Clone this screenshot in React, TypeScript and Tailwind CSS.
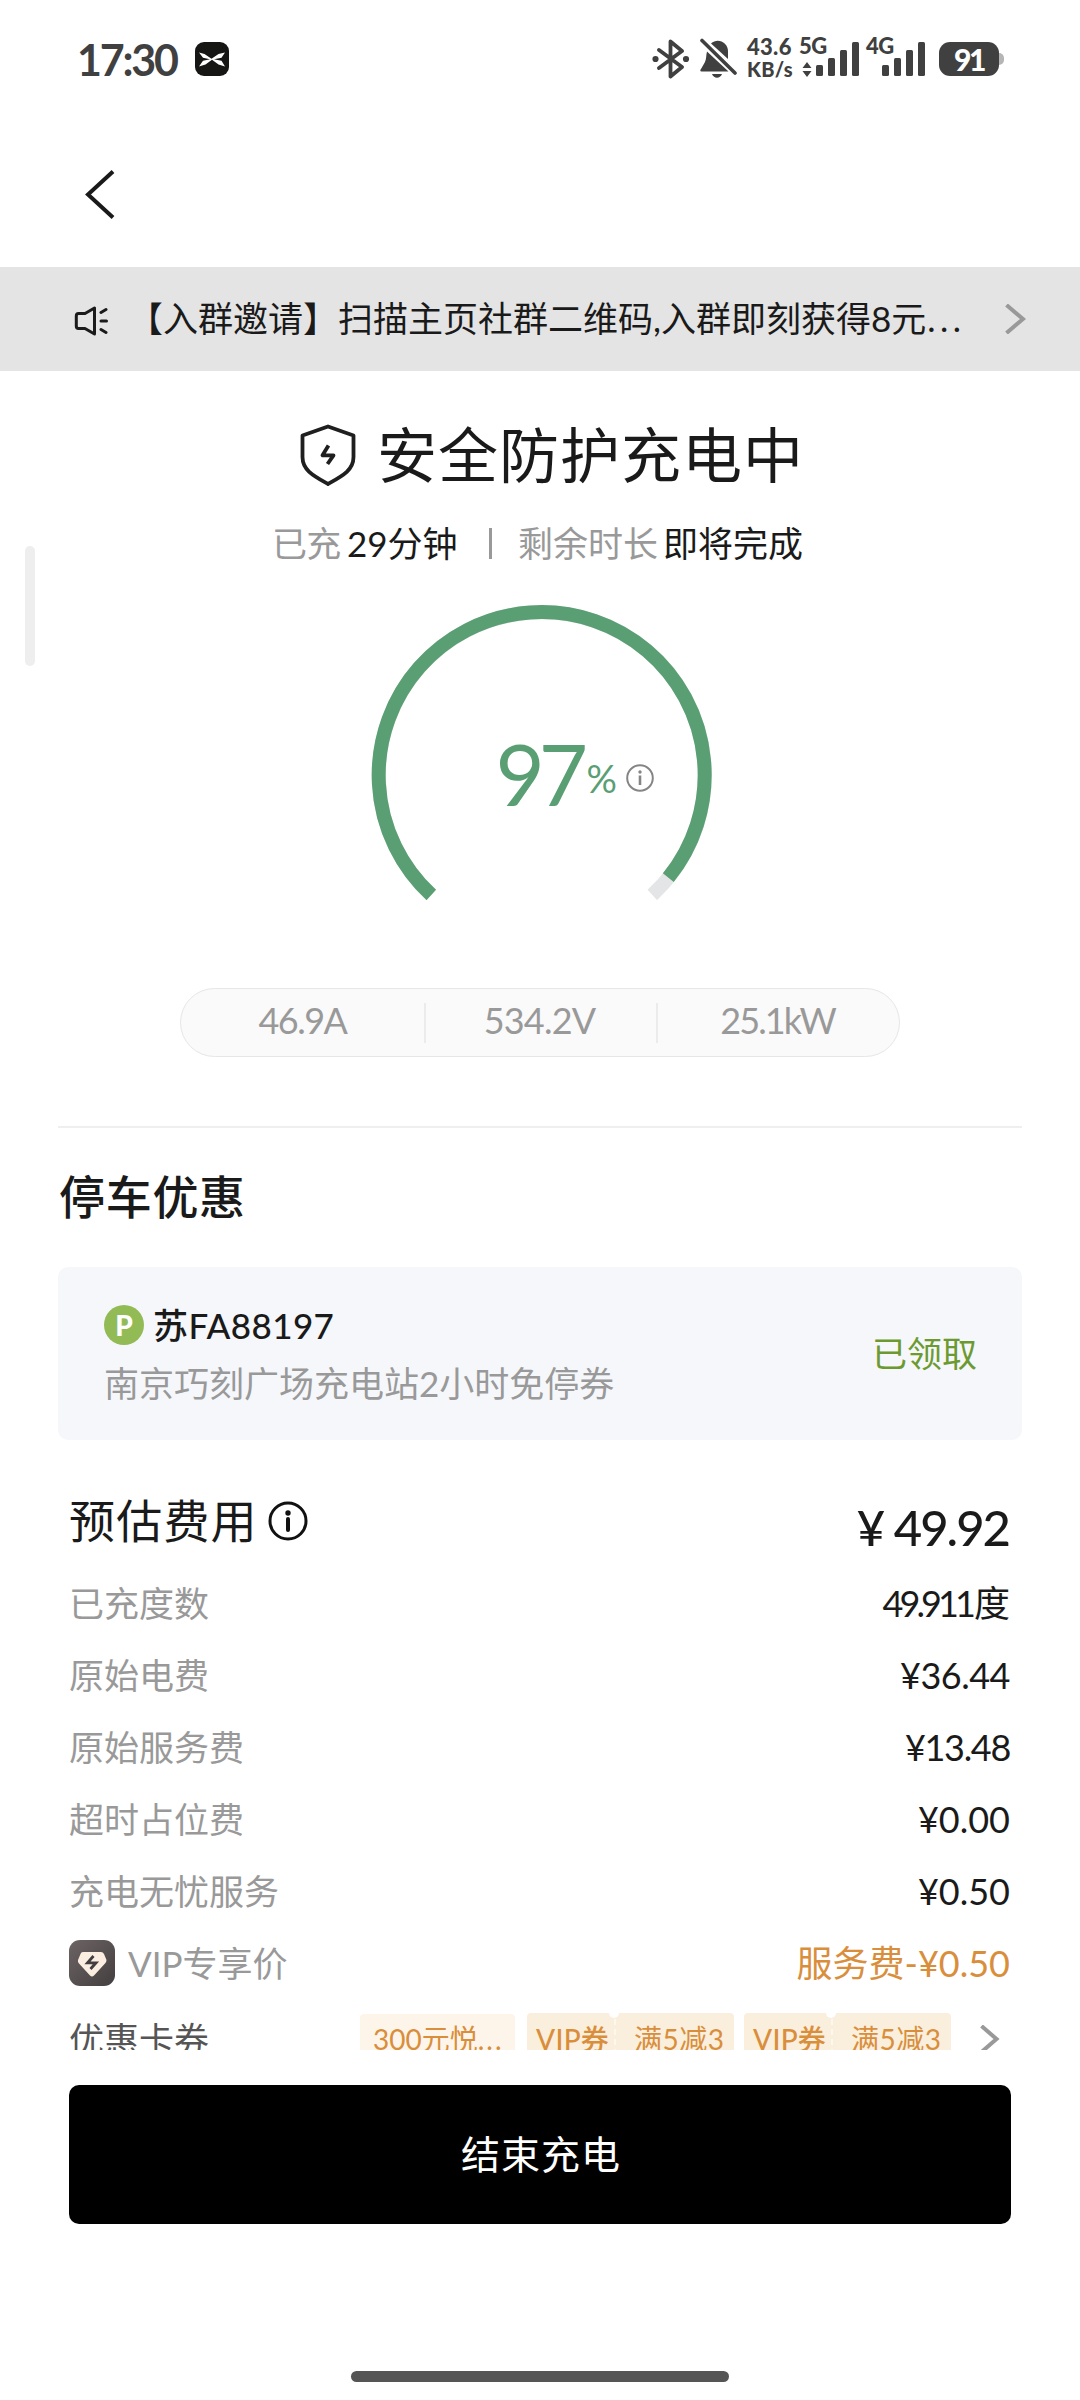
import React from 'react'

interface FeeRow {
  label: string
  value: string
  unit?: string
  tracking: string
}

const feeRows: FeeRow[] = [
  { label: '已充度数', value: '49.911', unit: '度', tracking: 'tracking-[-3.9px] mr-[2px]' },
  { label: '原始电费', value: '¥36.44', tracking: 'tracking-[-0.5px]' },
  { label: '原始服务费', value: '¥13.48', tracking: 'tracking-[-1.3px]' },
  { label: '超时占位费', value: '¥0.00', tracking: 'tracking-normal' },
  { label: '充电无忧服务', value: '¥0.50', tracking: 'tracking-normal' }
]

function SignalBars() {
  return (
    <svg className="h-[34px] w-[44px]" viewBox="0 0 44 34" fill="#404040">
      <rect x="0" y="23" width="7" height="11" rx="1.5" />
      <rect x="12" y="16" width="7" height="18" rx="1.5" />
      <rect x="24" y="8" width="7" height="26" rx="1.5" />
      <rect x="36" y="0" width="7" height="34" rx="1.5" />
    </svg>
  )
}

function StatusBar() {
  return (
    <div className="flex h-[120px] items-start pl-[77px] pr-[76px] pt-[36px] text-[#404040]">
      <div className="flex h-[46px] w-[118px] items-center text-[43px] font-bold leading-none tracking-[-2.2px]">17:30</div>
      <svg className="mt-[6px] h-[34px] w-[34px]" viewBox="0 0 34 34">
        <rect width="34" height="34" rx="9" fill="#161715" />
        <path
          d="M4 10.5L9.5 12l7 4.8L23.500 12 30 10.500 26.500 15.800 19 17.200 26.500 18.800 30 24.500 23.500 22.500 17 17.700 10.500 22.500 4 24.500 8 18.800 15 17.200 8 15.800z"
          fill="#fff"
        />
      </svg>
      <div className="flex-1" />
      <svg className="mt-[3px] h-[40px] w-[38px]" viewBox="0 0 38 40" fill="none" stroke="#404040" strokeWidth="3.8" strokeLinejoin="round" strokeLinecap="round">
        <path d="M7 11L30 28 18.500 37.500V2.500L30 12 7 29" />
        <circle cx="3.500" cy="20" r="1.600" fill="#404040" strokeWidth="3" />
        <circle cx="34" cy="20" r="1.600" fill="#404040" strokeWidth="3" />
      </svg>
      <svg className="ml-[10px] mt-[2px] h-[40px] w-[37px]" viewBox="0 0 37 40" fill="#404040">
        <path d="M7 13.500L28.500 33.500H1.500C0 33.500 0 32 1 31l4-7c1.500-3 1-7 2-10.500z" />
        <path d="M11 5.500C18-1 28 5 28 13v8z" />
        <path d="M12 36h10c-2 5-8 5-10 0z" />
        <path d="M2 2.500L35 35" stroke="#404040" strokeWidth="3.600" strokeLinecap="round" />
      </svg>
      <div className="ml-[10px] -mt-px flex w-[52px] flex-col text-[22px] font-black leading-[23px]">
        <span className="tracking-[0.3px]">43.6</span>
        <span className="text-[20px] tracking-[0.3px]">KB/s</span>
      </div>
      <div className="relative flex h-[42px] w-[67px] items-end pl-[17px] pt-[6px]">
        <span className="absolute left-0 top-[-2px] text-[22px] font-black leading-[23px] tracking-[-0.5px]">5G</span>
        <svg className="absolute bottom-[1px] left-[3px] h-[15px] w-[10px]" viewBox="0 0 10 15" fill="#404040">
          <path d="M5 0l4.500 6h-9zM5 15l4.500-6h-9z" />
        </svg>
        <div className="h-[36px]">
          <SignalBars />
        </div>
      </div>
      <div className="relative flex h-[42px] w-[73px] items-end pl-[16px] pt-[6px]">
        <span className="absolute left-0 top-[-2px] text-[22px] font-black leading-[23px] tracking-[-0.5px]">4G</span>
        <div className="h-[36px]">
          <SignalBars />
        </div>
      </div>
      <div className="mt-[6px] flex items-center">
        <div className="flex h-[34px] w-[60px] items-center justify-center rounded-[11px] bg-[#404040] pb-px text-[30px] font-black leading-none tracking-[-2.500px] text-white">91</div>
        <div className="h-[12px] w-[5px] rounded-r-full bg-[#b5b5b5]" />
      </div>
    </div>
  )
}

function NoticeBar() {
  return (
    <div className="flex h-[104px] items-center bg-[#e4e4e4] pl-[74px] text-[35px] text-[#1a1a1a]">
      <svg className="mt-[4px] h-[30px] w-[34px]" viewBox="0 0 34 30" fill="none" stroke="#1a1a1a" strokeWidth="3" strokeLinejoin="round" strokeLinecap="round">
        <path d="M4.500 7.500H11L20.500 2V28L11 22.500H4.500Q2.300 22.500 2.300 20V10Q2.300 7.500 4.500 7.500z" />
        <path d="M27 6.500l5-3M27 15h5.500M27 23.500l5 3" />
      </svg>
      <p className="ml-[20px] w-[860px] whitespace-nowrap pb-[2px] leading-[50px]">
        【入群邀请】扫描主页社群二维码,入群即刻获得8元<span className="pl-px tracking-[4.500px]">...</span>
      </p>
      <svg className="ml-[17px] h-[30px] w-[21px]" viewBox="0 0 21 30" fill="none" stroke="#999" strokeWidth="4">
        <path d="M1.500 1L18 15 1.500 29" />
      </svg>
    </div>
  )
}

function ChargeStatus() {
  return (
    <>
      <div className="mt-[48px] flex h-[72px] items-center pl-[300px]">
        <svg className="h-[62px] w-[56px]" viewBox="0 0 56 62" fill="none" stroke="#1f1f1f" strokeWidth="3.800" strokeLinejoin="round">
          <path d="M28 2.500L53.500 11.500V33C53.500 46 43 51.500 28 60 13 51.500 2.500 46 2.500 33V11.500z" />
          <path d="M28.500 21.500L22.500 31.300H33.500L27.500 40" />
        </svg>
        <h1 className="ml-[21px] whitespace-nowrap text-[60px] font-normal leading-[72px] tracking-[1px] text-[#1a1a1a]">安全防护充电中</h1>
      </div>
      <div className="mt-[27px] flex h-[50px] items-center whitespace-nowrap pl-[272px] text-[35px] leading-[50px] text-[#1a1a1a]">
        <span className="w-[75px] tracking-[-0.800px] text-[#999]">已充</span>
        <span className="w-[142px]">29分钟</span>
        <span className="h-[31px] w-[3px] bg-[#999]" />
        <span className="ml-[26px] w-[145px] text-[#999]">剩余时长</span>
        <span>即将完成</span>
      </div>
    </>
  )
}

function Gauge() {
  return (
    <div className="mt-[32px] flex justify-center pl-[3px]">
      <div className="relative h-[300px] w-[342px]">
        <svg className="h-[300px] w-[342px]" viewBox="371 600 342 300" fill="none" strokeWidth="14">
          <path d="M431.300 895A163 163 0 1 1 652.300 895" stroke="#e4e5e6" />
          <path d="M431.300 895A163 163 0 1 1 668.300 877.700" stroke="#5a9f74" />
        </svg>
        <div className="absolute left-[125px] top-[123px] flex h-[100px] items-center text-[#5a9f74]">
          <span className="w-[91px] text-[85px] leading-[100px] tracking-[-6px]">97</span>
          <span className="mt-[10px] text-[38px] leading-[44px]">%</span>
        </div>
        <svg className="absolute left-[255px] top-[164px] h-[28px] w-[28px]" viewBox="0 0 28 28" fill="none" stroke="#858585" strokeWidth="2">
          <circle cx="14" cy="14" r="12.800" />
          <path d="M14 11.500v9.500" strokeWidth="2.600" />
          <circle cx="14" cy="8" r="1.700" fill="#858585" stroke="none" />
        </svg>
      </div>
    </div>
  )
}

function Metrics() {
  return (
    <div className="ml-[180px] mt-[88px] flex h-[69px] w-[720px] items-center rounded-full border-[1.500px] border-[#e6e6e6] bg-[#fafafa] text-center text-[36px] text-[#999]">
      <span className="h-[40px] w-[245px] border-r-2 border-[#ebebeb] leading-[35px] tracking-[-1.500px]">46.9A</span>
      <span className="h-[40px] w-[232px] border-r-2 border-[#ebebeb] pr-[3px] leading-[35px] tracking-[-0.800px]">534.2V</span>
      <span className="h-[40px] flex-1 pr-[2px] leading-[35px] tracking-[-1.900px]">25.1kW</span>
    </div>
  )
}

function ParkingCard() {
  return (
    <div className="mx-[58px] flex h-[173px] items-center justify-between rounded-[10px] bg-[#f5f7fb] pl-[46px] pr-[45px]">
      <div className="whitespace-nowrap">
        <div className="flex h-[50px] items-center text-[35px] text-[#1a1a1a]">
          <span className="flex h-[40px] w-[40px] items-center justify-center rounded-full bg-[#93bb55] text-[28px] font-black text-white">P</span>
          <span className="ml-[9px] font-medium leading-[50px] tracking-[0.400px]">苏FA88197</span>
        </div>
        <div className="mt-[8px] text-[35px] leading-[50px] text-[#999]">南京巧刻广场充电站2小时免停券</div>
      </div>
      <span className="pb-[2px] text-[35px] leading-[50px] text-[#6d9a30]">已领取</span>
    </div>
  )
}

function VipIcon() {
  return (
    <svg className="h-[46px] w-[46px]" viewBox="0 0 46 46">
      <defs>
        <linearGradient id="vip" x1="0" y1="0" x2="1" y2="1">
          <stop offset="0" stopColor="#6d6464" />
          <stop offset="1" stopColor="#433e3f" />
        </linearGradient>
      </defs>
      <rect width="46" height="46" rx="11" fill="url(#vip)" />
      <path d="M14 12H32Q34 12 35 14L37.500 20Q37.500 22 36 23.500L25 35.500Q23 37.500 21 35.500L10 23.500Q8.500 22 9 20L11.500 14Q12 12 14 12z" fill="#fbeee0" />
      <path d="M24.500 16L18.500 22.800H27L21.500 29" fill="none" stroke="#433e3f" strokeWidth="2.800" />
    </svg>
  )
}

function Coupon({ name, text }: { name: string; text: string }) {
  return (
    <div className="relative flex h-[52px] w-[207px] items-center rounded-[4px] bg-[#faefdd]">
      <span className="w-[87px] pl-[9px] font-medium tracking-[0.300px]">{name}</span>
      <span className="pl-[20px] tracking-[0.500px]">{text}</span>
      <span className="absolute left-[82px] top-[-5px] h-[10px] w-[10px] rounded-full bg-white" />
      <span className="absolute left-[87px] top-[6px] h-[46px] border-l-2 border-dashed border-[#fdf8ee]" />
    </div>
  )
}

function FeeSection() {
  return (
    <div className="h-[610px] overflow-hidden pl-[69px] pr-[70px] text-[35px] text-[#1a1a1a]">
      <div className="mt-[41px] flex h-[80px] items-center justify-between">
        <div className="flex items-center">
          <h2 className="text-[46px] font-normal leading-[60px] tracking-[1.200px]">预估费用</h2>
          <svg className="ml-[10px] h-[40px] w-[40px]" viewBox="0 0 40 40" fill="none" stroke="#111" strokeWidth="3">
            <circle cx="20" cy="20" r="18" />
            <path d="M20 18v11" strokeWidth="4" strokeLinecap="round" />
            <circle cx="20" cy="12" r="2.700" fill="#111" stroke="none" />
          </svg>
        </div>
        <div className="mt-[11px] flex text-[49px] font-medium leading-[60px]">
          <span className="w-[37px]">¥</span>
          <span className="mr-px tracking-[-2px]">49.92</span>
        </div>
      </div>
      <div className="mt-[6px]">
        {feeRows.map((row) => (
          <div key={row.label} className="flex h-[72px] items-center justify-between">
            <span className="text-[#999]">{row.label}</span>
            <span className="text-[36px]">
              <span className={row.tracking}>{row.value}</span>
              {row.unit}
            </span>
          </div>
        ))}
      </div>
      <div className="flex h-[72px] items-center">
        <VipIcon />
        <span className="ml-[13px] flex-1 text-[#999]">VIP专享价</span>
        <span className="text-[36px] text-[#d98e3c]">服务费-¥0.50</span>
      </div>
      <div className="flex h-[80px] items-center text-[28px] text-[#d98e3c]">
        <span className="w-[291px] text-[35px] text-[#555]">优惠卡券</span>
        <div className="flex h-[50px] w-[155px] items-center rounded-[4px] bg-[#fdf5e9] pl-[13px]">
          300元悦<span className="tracking-[2px]">...</span>
        </div>
        <div className="ml-[12px] flex gap-[10px]">
          <Coupon name="VIP券" text="满5减3" />
          <Coupon name="VIP券" text="满5减3" />
        </div>
        <svg className="ml-[29px] h-[28px] w-[20px]" viewBox="0 0 20 28" fill="none" stroke="#999" strokeWidth="4">
          <path d="M1.500 1l15 13L1.500 27" />
        </svg>
      </div>
    </div>
  )
}

export default function App() {
  return (
    <div className="relative flex h-[2400px] w-[1080px] flex-col overflow-hidden bg-white font-['Lato','Noto_Sans_CJK_SC',sans-serif]">
      <StatusBar />
      <div className="h-[147px] pl-[84px] pt-[50px]">
        <svg className="h-[50px] w-[32px]" viewBox="0 0 32 50" fill="none" stroke="#1a1a1a" strokeWidth="4">
          <path d="M29 1.500L4 24.500 29 47.500" />
        </svg>
      </div>
      <NoticeBar />
      <ChargeStatus />
      <Gauge />
      <Metrics />
      <div className="mx-[58px] mt-[69px] h-[2px] bg-[#efefef]" />
      <h2 className="mt-[39px] h-[60px] pl-[59px] text-[46px] font-medium leading-[60px] tracking-[0.700px] text-[#1a1a1a]">停车优惠</h2>
      <div className="h-[40px]" />
      <ParkingCard />
      <FeeSection />
      <button className="ml-[69px] mt-[35px] h-[139px] w-[942px] rounded-[10px] bg-black pl-[2px] text-[39px] tracking-[1px] text-white">结束充电</button>
      <div className="mx-auto mt-[147px] h-[11px] w-[378px] rounded-full bg-[#555]" />
      <div className="absolute left-[25px] top-[546px] h-[120px] w-[10px] rounded-full bg-[#eee]" />
    </div>
  )
}
